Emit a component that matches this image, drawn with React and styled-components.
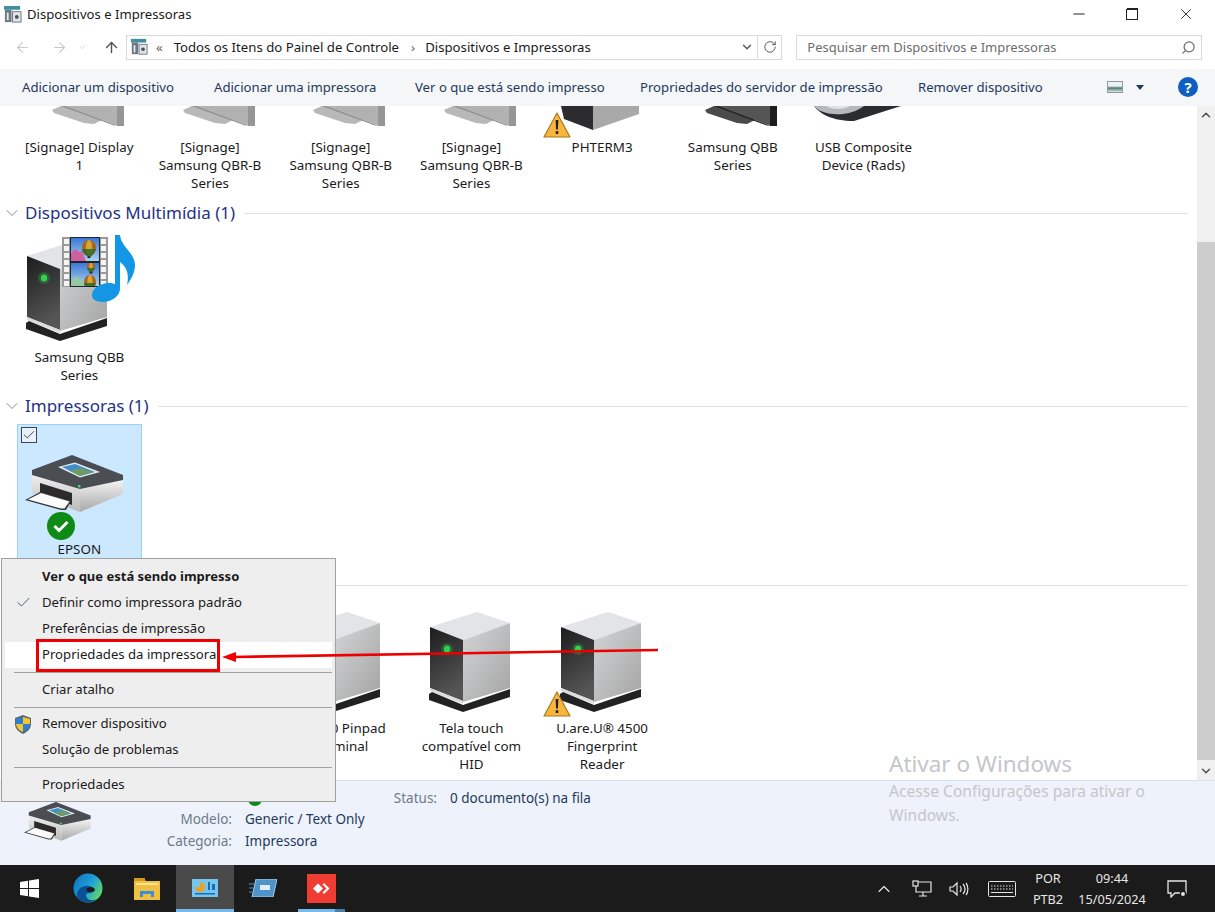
import React from "react";
import styled, { createGlobalStyle } from "styled-components";
import { ArrowLeft, ArrowRight, ArrowUp, ChevronDown, ChevronUp, RotateCw, Search, Minus, X, Check } from "lucide-react";

const GlobalStyle = createGlobalStyle`
  html, body { margin: 0; padding: 0; background: #fff; }
  * { box-sizing: border-box; }
  body { font-family: "Noto Sans", "Open Sans", sans-serif; font-size: 13.1px; color: #1a1a1a; }
`;

const WarningBadge = ({ className }) => (
  <svg className={className} width="28" height="26" viewBox="0 0 28 26">
    <path d="M14 1 L27 25 H1 Z" fill="#f8b73c" stroke="#a8781f" strokeWidth="1.2" strokeLinejoin="round" />
    <path d="M12.6 8 h2.8 l-.5 9.5 h-1.8 z" fill="#222" />
    <rect x="12.7" y="19.2" width="2.6" height="2.8" fill="#222" />
  </svg>
);

const ServerBody = () => (
  <>
    <path d="M1 15 L48 0 L81 11 L34 28 Z" fill="#e2e4e7" />
    <path d="M1 15 L34 28 V89 L1 76 Z" fill="url(#srvFront)" />
    <path d="M34 28 L81 11 V76 L34 90 Z" fill="url(#srvSide)" />
    <path d="M1 76 L34 89 L34 92 L1 79 Z" fill="#dcdcdc" />
    <path d="M0 82 L3 80 L34 93 L81 77 V85 L34 100 L0 88 Z" fill="#222" />
    <circle cx="18" cy="37" r="6" fill="#2fd14a" opacity="0.25" />
    <ellipse cx="18" cy="37" rx="3.2" ry="3.6" fill="#2fd14a" />
  </>
);

const ServerIcon = () => (
  <svg width="82" height="100" viewBox="0 0 82 100">
    <ServerBody />
  </svg>
);

const Balloon = ({ x, y, r }) => (
  <g>
    <ellipse cx={x} cy={y} rx={r} ry={r * 1.15} fill="#a8641c" />
    <ellipse cx={x} cy={y} rx={r * 0.45} ry={r * 1.15} fill="#d9a52e" />
    <path d={`M${x - r} ${y + 1} h${r * 2} c-1 ${r * 0.5} -${r * 0.5} ${r} -${r} ${r * 1.1} c-${r * 0.5} -${r * 0.1} -${r} -${r * 0.6} -${r} -${r * 1.1} z`} fill="#2f6a2b" opacity="0.85" />
    <rect x={x - 1.5} y={y + r * 1.15} width="3" height="2" fill="#2a2a2a" />
  </g>
);

const FilmHoles = ({ x }) => (
  <>
    {[4, 11, 18, 25, 32, 39, 46].map((y) => (
      <rect key={y} x={x} y={y} width="5" height="5" fill="#f4f4f4" />
    ))}
  </>
);

const MediaServerIcon = () => (
  <svg width="112" height="108" viewBox="0 0 112 108">
    <defs>
      <linearGradient id="skyA" x1="0" y1="0" x2="0" y2="1">
        <stop offset="0" stopColor="#3c78d8" />
        <stop offset="1" stopColor="#a8d4ee" />
      </linearGradient>
      <clipPath id="frameB">
        <rect x="45" y="28" width="28" height="23" />
      </clipPath>
    </defs>
    <g transform="translate(0,6)">
      <ServerBody />
    </g>
    <rect x="36" y="2" width="46" height="50" fill="#9a9a9a" />
    <FilmHoles x="38" />
    <FilmHoles x="75" />
    <rect x="44" y="2" width="30" height="50" fill="#20242c" />
    <rect x="45" y="3" width="28" height="23" fill="url(#skyA)" />
    <rect x="45" y="28" width="28" height="23" fill="url(#skyA)" />
    <path d="M45 26 v-8 l4 -4 4 3 3 -1 4 10 z" fill="#cf5f9e" />
    <path d="M45 51 v-6 l5 -4 5 3 5 7 z" fill="#96c8a8" />
    <Balloon x={63} y={13} r={7} />
    <g clipPath="url(#frameB)">
      <Balloon x={65} y={32} r={4} />
      <Balloon x={64} y={47} r={6} />
    </g>
    <path d="M89 0 h5 c1 12 15 18 15 30 c0 8 -4 14 -8 20 c2 -9 1 -17 -7 -23 V54 c0 7 -9 13 -17 13 c-8 0 -11 -3 -11 -7 c0 -7 9 -12 17 -12 c3 0 5 .5 6 1.5 Z" fill="#1496e6" />
  </svg>
);

const PrinterIcon = ({ width = 100, tag = "a" }) => (
  <svg width={width} height={(width * 60) / 100} viewBox="0 0 100 60">
    <defs>
      <linearGradient id={`prnFront${tag}`} x1="0" y1="0" x2="0" y2="1">
        <stop offset="0" stopColor="#f2f2f2" />
        <stop offset="1" stopColor="#b8b8b8" />
      </linearGradient>
      <linearGradient id={`prnSide${tag}`} x1="0" y1="0" x2="0" y2="1">
        <stop offset="0" stopColor="#f6f6f6" />
        <stop offset="1" stopColor="#a8a8a8" />
      </linearGradient>
    </defs>
    <path d="M7 18 L55 34 V57 L47 54 L7 38 Z" fill={`url(#prnFront${tag})`} />
    <path d="M55 34 L98 24 V39 L55 57 Z" fill={`url(#prnSide${tag})`} />
    <path d="M15 28 L47 38 V50 L15 38 Z" fill="#2b2b2b" />
    <path d="M0 45 L15 37 L46 46 L41 55 L36 55 Z" fill="#3a3a3a" />
    <path d="M3 44.5 L16 38 L44.5 46.5 L39.5 53.5 L36 53.5 Z" fill="#fbfbfb" />
    <path d="M7 15 L47 0 L98 20 V25 L55 34 L7 20 Z" fill="#4a4e53" />
    <path d="M33 12 L50 7.5 L75 17 L55 22.5 Z" fill="#e6ecef" />
    <path d="M37 12 L50 9 L70 17 L55 21 Z" fill="#3f8fcc" />
    <path d="M45 16 L55 13 L68 17 L55 21 Z" fill="#6f9a62" />
    <rect x="53" y="30" width="2.4" height="2.4" fill="#3fe06a" />
  </svg>
);

const CheckBadge = () => (
  <svg width="28" height="28" viewBox="0 0 28 28">
    <circle cx="14" cy="14" r="14" fill="#0e8a16" />
    <path d="M7.5 14 L12 18.5 L20.5 10" fill="none" stroke="#fff" strokeWidth="3" />
  </svg>
);

const MonitorStub = ({ dark }) => (
  <svg width="72" height="20" viewBox="0 0 72 20">
    <path d="M9 0 L0 4 L2 7 L32 17 L42 18 L50 14 L30 0 Z" fill={dark ? "#4a4a4a" : "#b8b8b8"} />
    <path d="M13 0 L65 19.5 H72 V0 Z" fill={dark ? "#555" : "#b2b2b2"} />
    <path d="M13 0 L65 19.5 L62 19.5 L9 0 Z" fill={dark ? "#222" : "#8e8e8e"} />
    <path d="M65 0 H72 V20 H65 Z" fill={dark ? "#1c1c1c" : "#969696"} />
  </svg>
);

const ServerStub = () => (
  <svg width="78" height="24" viewBox="0 0 78 24">
    <path d="M0 0 H32 V24 L3 13 Z" fill="#2c2c2e" />
    <path d="M32 0 H78 V8 L32 24 Z" fill="#a9a9a9" />
  </svg>
);

const UsbStub = () => (
  <svg width="89" height="15" viewBox="0 0 89 15">
    <path d="M2 0 C8 8 20 15 42 15 L89 0 Z" fill="#2a2d30" />
    <path d="M2 0 C10 10 36 12 52 0 Z" fill="#b4b8bc" />
    <path d="M14 0 C20 4 32 4 38 0 Z" fill="#dfe2e4" />
  </svg>
);

const PanelGlyph = ({ size = 20 }) => (
  <svg width={size} height={size} viewBox="0 0 20 20">
    <rect x="1" y="1" width="17" height="4" fill="#3f8f9f" />
    <rect x="2" y="5" width="7" height="13" fill="#6d7780" />
    <rect x="10" y="7" width="9" height="11" fill="#dfe3e6" stroke="#6d7780" />
    <circle cx="14.5" cy="12.5" r="2" fill="#44505a" />
    <rect x="4" y="8" width="2" height="8" fill="#e4e8ea" />
  </svg>
);

const ShieldGlyph = () => (
  <svg width="18" height="19" viewBox="0 0 18 19">
    <path d="M9 0 L17 3 V9 C17 14 13 17 9 19 C5 17 1 14 1 9 V3 Z" fill="#5a6670" />
    <path d="M9 2 V9 H2 V4 Z" fill="#2d7fd3" />
    <path d="M9 2 L16 4 V9 H9 Z" fill="#f4c430" />
    <path d="M2 9 H9 V17 C5 15.5 2.5 13 2 9 Z" fill="#f4c430" />
    <path d="M9 9 H16 C15.5 13 13 15.5 9 17 Z" fill="#2d7fd3" />
  </svg>
);

const Page = styled.div`
  position: relative;
  width: 1215px;
  height: 912px;
  display: flex;
  flex-direction: column;
  overflow: hidden;
  background: #fff;
`;

const SharedDefs = styled.svg`
  position: absolute;
  width: 0;
  height: 0;
`;

const TitleBar = styled.div`
  height: 30px;
  display: flex;
  align-items: center;
  padding: 0 5px 2px 3px;
  gap: 5px;
  line-height: 26px;
`;

const TitleText = styled.span`
  flex: 1;
`;

const WindowButton = styled.span`
  width: 48.5px;
  display: flex;
  justify-content: center;
  align-items: center;
  color: #222;
`;

const RestoreGlyph = styled.span`
  position: relative;
  width: 12px;
  height: 12px;
  &::before, &::after {
    content: "";
    position: absolute;
    border: 1.4px solid #222;
    background: #fff;
    width: 9.5px;
    height: 9.5px;
  }
  &::before { top: 0; right: 0; }
  &::after { bottom: 0; left: 0; }
`;

const NavBar = styled.div`
  height: 39px;
  display: flex;
  align-items: flex-start;
  padding-top: 5px;
  padding-right: 13px;
`;

const NavButtons = styled.div`
  width: 126px;
  height: 25px;
  display: flex;
  align-items: center;
  padding-left: 14px;
  gap: 20px;
`;

const NavArrow = styled.span`
  display: flex;
  color: ${(p) => (p.$on ? "#555" : "#c9c9c9")};
  margin-left: ${(p) => p.$shift || 0}px;
`;

const AddressBox = styled.div`
  width: 657px;
  height: 25px;
  display: flex;
  align-items: center;
  border: 1px solid #d9d9d9;
  padding: 0 0 1px 3px;
  font-size: 13.2px;
`;

const Crumb = styled.span`
  white-space: nowrap;
  margin-left: ${(p) => p.$gap || 0}px;
  color: ${(p) => (p.$soft ? "#666" : "#1a1a1a")};
`;

const AddressEnd = styled.span`
  margin-left: auto;
  display: flex;
  align-items: center;
  height: 100%;
  color: #555;
`;

const AddressDrop = styled.span`
  width: 21px;
  display: flex;
  justify-content: center;
`;

const RefreshCell = styled.span`
  width: 24px;
  height: 100%;
  border-left: 1px solid #d9d9d9;
  display: flex;
  align-items: center;
  justify-content: center;
`;

const SearchBox = styled.div`
  width: 406px;
  height: 25px;
  margin-left: 14px;
  display: flex;
  align-items: center;
  justify-content: space-between;
  border: 1px solid #d9d9d9;
  padding: 0 5px 1px 10px;
  color: #6d6d6d;
  font-size: 13px;
`;

const MirrorSearch = styled(Search)`
  transform: scaleX(-1);
`;

const CommandBar = styled.div`
  height: 37px;
  background: #f4f6f8;
  display: flex;
  align-items: center;
  padding: 0 17px 1px 22px;
  color: #1e395b;
  font-size: 13.15px;
  white-space: nowrap;
`;

const CommandItem = styled.span`
  width: ${(p) => p.$w}px;
`;

const CommandTools = styled.div`
  margin-left: auto;
  display: flex;
  align-items: center;
`;

const ViewGlyph = styled.span`
  width: 16px;
  height: 12px;
  border: 1px solid #8d9aa6;
  background: linear-gradient(#eaf2f7 40%, #4f7a6a 60%, #dfe9ee);
`;

const Caret = styled.span`
  width: 0;
  height: 0;
  margin: 0 34px 0 13px;
  border-left: 4.5px solid transparent;
  border-right: 4.5px solid transparent;
  border-top: 5px solid #1e395b;
`;

const HelpBadge = styled.span`
  width: 20px;
  height: 20px;
  border-radius: 50%;
  background: #0f5fc0;
  color: #fff;
  font-weight: 700;
  font-size: 15px;
  display: flex;
  align-items: center;
  justify-content: center;
`;

const Main = styled.div`
  height: 674px;
  display: flex;
`;

const Content = styled.div`
  flex: 1;
  padding-left: 14px;
  overflow: hidden;
`;

const ItemRow = styled.div`
  display: flex;
  height: ${(p) => p.$height}px;
  margin-top: ${(p) => p.$top || 0}px;
`;

const Item = styled.div`
  position: relative;
  width: 124.7px;
  margin: 0 3px;
  text-align: center;
  font-size: 13.4px;
  line-height: 18px;
  background: ${(p) => (p.$selected ? "#cce8ff" : "transparent")};
  border: 1px solid ${(p) => (p.$selected ? "#99d1ff" : "transparent")};
  border-top-width: ${(p) => (p.$selected ? "1px" : "0")};
  border-bottom: 0;
`;

const IconSlot = styled.div`
  position: relative;
  height: ${(p) => p.$height}px;
  padding-top: ${(p) => p.$top || 0}px;
  display: flex;
  justify-content: center;
  align-items: flex-start;
  margin-left: ${(p) => p.$shift || 0}px;
`;

const Label = styled.div`
  padding: 0 6px;
`;

const Warn = styled(WarningBadge)`
  position: absolute;
  left: ${(p) => p.$left}px;
  bottom: ${(p) => p.$bottom}px;
`;

const Tick = styled.span`
  position: absolute;
  top: 2px;
  left: 3px;
  width: 16px;
  height: 16px;
  border: 1px solid #444;
  background: #e6f2fb;
  display: flex;
  align-items: center;
  justify-content: center;
  color: #333;
`;

const Status = styled.span`
  position: absolute;
  left: 29px;
  top: 87px;
  display: flex;
`;

const GroupHeader = styled.div`
  height: 20px;
  display: flex;
  align-items: center;
  padding-right: 9px;
  margin-left: -12px;
  color: #1e3287;
  font-size: 17px;
  line-height: 18px;
  white-space: nowrap;
`;

const GroupChevron = styled.span`
  display: flex;
  color: #7c7c7c;
  margin-right: 3px;
`;

const GroupRule = styled.span`
  flex: 1;
  height: 1px;
  margin-left: 9px;
  background: #e2e2e2;
`;

const ScrollBar = styled.div`
  width: 18px;
  background: #f0f0f0;
  display: flex;
  flex-direction: column;
  align-items: center;
  color: #555;
`;

const ScrollEnd = styled.span`
  height: 18px;
  flex: none;
  display: flex;
  align-items: center;
  margin-top: ${(p) => p.$top || 0}px;
`;

const ScrollThumb = styled.span`
  width: 100%;
  height: 518px;
  margin-top: ${(p) => p.$top}px;
  background: #cdcdcd;
`;

const DetailPane = styled.div`
  height: 85px;
  background: #eef2fb;
  border-top: 1px solid #d6e0ee;
  padding: 5px 0 0 24px;
  display: grid;
  grid-template-columns: 68px 140px 13px 192px 13px 1fr;
  grid-template-rows: 23px 21px 22px;
  line-height: 22px;
  font-size: 13.5px;
  color: #1e395b;
  align-items: end;
`;

const DetailIcon = styled.div`
  grid-column: 1;
  grid-row: 1 / span 3;
  align-self: start;
  padding-top: 16px;
`;

const DetailKey = styled.span`
  grid-column: ${(p) => p.$col};
  grid-row: ${(p) => p.$row};
  text-align: right;
  color: #6d7a8a;
`;

const DetailValue = styled.span`
  grid-column: ${(p) => p.$col};
  grid-row: ${(p) => p.$row};
`;

const StateDot = styled.span`
  grid-column: 4;
  grid-row: 1;
  align-self: start;
  width: 14px;
  height: 14px;
  margin: 6px 0 0 3px;
  border-radius: 50%;
  background: #0e8a16;
`;

const Taskbar = styled.div`
  height: 47px;
  background: #1b1b1b;
  display: flex;
  align-items: stretch;
  color: #e6e6e6;
`;

const TaskButton = styled.span`
  position: relative;
  width: ${(p) => p.$w || 58}px;
  display: flex;
  align-items: center;
  justify-content: center;
  background: ${(p) => (p.$active ? "#4a4a4a" : "transparent")};
  padding-bottom: 1px;
  &::after {
    content: "";
    position: absolute;
    bottom: 0;
    height: 3px;
    left: ${(p) => (p.$active ? 0 : 6)}px;
    right: ${(p) => (p.$active ? 0 : 6)}px;
    background: ${(p) =>
      p.$active
        ? "#76b9ed"
        : p.$open
          ? "linear-gradient(90deg, #76b9ed 79%, #4a7da6 79%)"
          : "transparent"};
  }
`;

const TrayZone = styled.div`
  margin-left: auto;
  display: flex;
  align-items: center;
`;

const TrayIcon = styled.span`
  width: ${(p) => p.$w}px;
  display: flex;
  justify-content: center;
`;

const TrayText = styled.span`
  width: ${(p) => p.$w}px;
  text-align: center;
  line-height: 21px;
  font-size: 12.7px;
`;

const ContextMenu = styled.div`
  position: absolute;
  left: 1px;
  top: 558px;
  width: 335px;
  height: 244px;
  padding: 5px 3px;
  background: #eeeeee;
  border: 1px solid #a0a0a0;
  z-index: 2;
`;

const MenuRow = styled.div`
  position: relative;
  height: 26px;
  line-height: 24px;
  padding-left: 37px;
  font-weight: ${(p) => (p.$bold ? 700 : 400)};
  font-size: ${(p) => (p.$bold ? 13 : 13.15)}px;
  background: ${(p) => (p.$hot ? "#fff" : "transparent")};
`;

const MenuMark = styled.span`
  position: absolute;
  left: ${(p) => p.$left}px;
  top: 4px;
  display: flex;
  color: #4c5c6c;
`;

const MenuLine = styled.div`
  height: ${(p) => p.$height}px;
  padding-left: 9px;
  display: flex;
  align-items: center;
  &::after {
    content: "";
    width: 100%;
    height: 1px;
    background: #a0a0a0;
  }
`;

const RedBox = styled.div`
  position: absolute;
  left: 36px;
  top: 639px;
  width: 184px;
  height: 33px;
  border: 3px solid #ee0000;
  z-index: 3;
`;

const ArrowLayer = styled.svg`
  position: absolute;
  left: 0;
  top: 0;
  z-index: 3;
  pointer-events: none;
`;

const Watermark = styled.div`
  position: absolute;
  left: 889px;
  top: 750px;
  width: 310px;
  color: #c4c6c9;
  font-size: 15.6px;
  line-height: 24px;
  z-index: 1;
`;

const WatermarkTitle = styled.div`
  font-size: 22.5px;
  line-height: 28px;
  margin-bottom: 1px;
`;

const commands = [
  { label: "Adicionar um dispositivo", w: 192 },
  { label: "Adicionar uma impressora", w: 201 },
  { label: "Ver o que está sendo impresso", w: 225 },
  { label: "Propriedades do servidor de impressão", w: 278 },
  { label: "Remover dispositivo", w: 130 },
];

const topItems = [
  { label: "[Signage] Display 1", stub: <MonitorStub />, shift: 17 },
  { label: "[Signage] Samsung QBR-B Series", stub: <MonitorStub />, shift: 17 },
  { label: "[Signage] Samsung QBR-B Series", stub: <MonitorStub />, shift: 17 },
  { label: "[Signage] Samsung QBR-B Series", stub: <MonitorStub />, shift: 17 },
  { label: "PHTERM3", stub: <ServerStub />, shift: -4, warn: true },
  { label: "Samsung QBB Series", stub: <MonitorStub dark />, shift: 17 },
  { label: "USB Composite Device (Rads)", stub: <UsbStub />, shift: -13 },
];

// the first two labels of this group sit under the context menu
const bottomItems = [
  { label: "" },
  { label: "" },
  { label: "iPP320 Pinpad Terminal" },
  { label: "Tela touch compatível com HID" },
  { label: "U.are.U® 4500 Fingerprint Reader", warn: true },
];

const App = () => {
  return (
    <Page>
      <GlobalStyle />
      <SharedDefs>
        <defs>
          <linearGradient id="srvFront" x1="0" y1="0" x2="0.3" y2="1">
            <stop offset="0" stopColor="#1c1c1c" />
            <stop offset="1" stopColor="#555" />
          </linearGradient>
          <linearGradient id="srvSide" x1="0" y1="0" x2="1" y2="1">
            <stop offset="0" stopColor="#d4d5d7" />
            <stop offset="1" stopColor="#a4a4a4" />
          </linearGradient>
        </defs>
      </SharedDefs>

      <TitleBar>
        <PanelGlyph size={19} />
        <TitleText>Dispositivos e Impressoras</TitleText>
        <WindowButton><Minus size={18} strokeWidth={1.4} /></WindowButton>
        <WindowButton><RestoreGlyph /></WindowButton>
        <WindowButton><X size={18} strokeWidth={1.2} /></WindowButton>
      </TitleBar>

      <NavBar>
        <NavButtons>
          <NavArrow><ArrowLeft size={17} strokeWidth={1.5} /></NavArrow>
          <NavArrow><ArrowRight size={17} strokeWidth={1.5} /></NavArrow>
          <NavArrow $shift={-10}><ChevronDown size={9} strokeWidth={2} /></NavArrow>
          <NavArrow $on $shift={-4}><ArrowUp size={17} strokeWidth={2} /></NavArrow>
        </NavButtons>
        <AddressBox>
          <PanelGlyph size={18} />
          <Crumb $gap={8} $soft>«</Crumb>
          <Crumb $gap={11}>Todos os Itens do Painel de Controle</Crumb>
          <Crumb $gap={12} $soft>›</Crumb>
          <Crumb $gap={10}>Dispositivos e Impressoras</Crumb>
          <AddressEnd>
            <AddressDrop><ChevronDown size={14} strokeWidth={2.4} /></AddressDrop>
            <RefreshCell><RotateCw size={14} strokeWidth={1.6} /></RefreshCell>
          </AddressEnd>
        </AddressBox>
        <SearchBox>
          <span>Pesquisar em Dispositivos e Impressoras</span>
          <MirrorSearch size={15} strokeWidth={2} />
        </SearchBox>
      </NavBar>

      <CommandBar>
        {commands.map((c) => (
          <CommandItem key={c.label} $w={c.w}>{c.label}</CommandItem>
        ))}
        <CommandTools>
          <ViewGlyph />
          <Caret />
          <HelpBadge>?</HelpBadge>
        </CommandTools>
      </CommandBar>

      <Main>
        <Content>
          <ItemRow $height={97}>
            {topItems.map((it, i) => (
              <Item key={i}>
                <IconSlot $height={32} $shift={it.shift}>
                  {it.stub}
                  {it.warn && <Warn $left={6} $bottom={0} />}
                </IconSlot>
                <Label>{it.label}</Label>
              </Item>
            ))}
          </ItemRow>

          <GroupHeader>
            <GroupChevron><ChevronDown size={20} strokeWidth={1.1} /></GroupChevron>
            Dispositivos Multimídia (1)
            <GroupRule />
          </GroupHeader>
          <ItemRow $height={173}>
            <Item>
              <IconSlot $height={125} $top={12} $shift={5}>
                <MediaServerIcon />
              </IconSlot>
              <Label>Samsung QBB Series</Label>
            </Item>
          </ItemRow>

          <GroupHeader>
            <GroupChevron><ChevronDown size={20} strokeWidth={1.1} /></GroupChevron>
            Impressoras (1)
            <GroupRule />
          </GroupHeader>
          <ItemRow $height={151} $top={8}>
            <Item $selected>
              <Tick><Check size={14} strokeWidth={1.5} /></Tick>
              <IconSlot $height={115} $top={30} $shift={-8}>
                <PrinterIcon />
              </IconSlot>
              <Status><CheckBadge /></Status>
              <Label>EPSON</Label>
            </Item>
          </ItemRow>

          <GroupHeader>
            <GroupRule />
          </GroupHeader>
          <ItemRow $height={185}>
            {bottomItems.map((it, i) => (
              <Item key={i}>
                <IconSlot $height={124} $top={17} $shift={-2}>
                  <ServerIcon />
                  {it.warn && <Warn $left={4} $bottom={2} />}
                </IconSlot>
                <Label>{it.label}</Label>
              </Item>
            ))}
          </ItemRow>
        </Content>
        <ScrollBar>
          <ScrollEnd><ChevronUp size={14} strokeWidth={2.6} /></ScrollEnd>
          <ScrollThumb $top={118} />
          <ScrollEnd $top={2}><ChevronDown size={14} strokeWidth={2.6} /></ScrollEnd>
        </ScrollBar>
      </Main>

      <DetailPane>
        <DetailIcon><PrinterIcon width={68} tag="b" /></DetailIcon>
        <StateDot />
        <DetailKey $col={4} $row={1}>Status:</DetailKey>
        <DetailValue $col={6} $row={1}>0 documento(s) na fila</DetailValue>
        <DetailKey $col={2} $row={2}>Modelo:</DetailKey>
        <DetailValue $col={4} $row={2}>Generic / Text Only</DetailValue>
        <DetailKey $col={2} $row={3}>Categoria:</DetailKey>
        <DetailValue $col={4} $row={3}>Impressora</DetailValue>
      </DetailPane>

      <Taskbar>
        <TaskButton>
          <svg width="19" height="19" viewBox="0 0 19 19" fill="#fff">
            <path d="M0 3 L8 1.8 V9 H0 Z M9 1.6 L19 0 V9 H9 Z M0 10 H8 V17.2 L0 16 Z M9 10 H19 V19 L9 17.4 Z" />
          </svg>
        </TaskButton>
        <TaskButton $w={60}>
          <svg width="30" height="30" viewBox="0 0 30 30">
            <defs>
              <linearGradient id="edgeA" x1="0" y1="0" x2="1" y2="0.6">
                <stop offset="0" stopColor="#0c6fbf" />
                <stop offset="0.6" stopColor="#1fa0d8" />
                <stop offset="1" stopColor="#5ed66d" />
              </linearGradient>
            </defs>
            <circle cx="15" cy="15" r="14.5" fill="url(#edgeA)" />
            <path d="M4 24 C3 14 14 10 20 15 C23 18 20 20 16 20 C13 20 12 22 14 25 C16 28 22 28 25 25 C20 31 8 31 4 24 Z" fill="#0b4f94" />
            <path d="M13 17 C15 13 21 13 22 17 C21 19 17 19 15 19 Z" fill="#1b1b1b" />
          </svg>
        </TaskButton>
        <TaskButton>
          <svg width="26" height="24" viewBox="0 0 26 24">
            <path d="M0 3 H10 L12 5 H26 V24 H0 Z" fill="#f0c040" />
            <rect x="0" y="2" width="11" height="3" fill="#d09a20" />
            <rect x="2" y="7" width="22" height="2" fill="#fbe39a" />
            <rect x="6" y="15" width="14" height="6" fill="#3c8fd8" />
            <rect x="9" y="18" width="8" height="6" fill="#f0c040" />
          </svg>
        </TaskButton>
        <TaskButton $active>
          <svg width="26" height="18" viewBox="0 0 26 18">
            <rect width="26" height="18" fill="#74c6f0" />
            <path d="M8 8 V3 A5 5 0 1 1 3 8 Z" fill="#f0a020" />
            <rect x="16" y="3" width="2" height="8" fill="#1c6cb0" />
            <rect x="20" y="5" width="3" height="6" fill="#1c6cb0" />
            <rect x="3" y="14" width="20" height="1.5" fill="#1c6cb0" />
          </svg>
        </TaskButton>
        <TaskButton>
          <svg width="28" height="18" viewBox="0 0 28 18">
            <path d="M7 0 H28 L24 18 H3 Z" fill="#4f93c8" stroke="#9fd0ef" />
            <rect x="11" y="6" width="10" height="5" fill="#dceefa" />
            <path d="M0 5 H5 M0 9 H4 M0 13 H3" stroke="#4f93c8" strokeWidth="1.2" />
          </svg>
        </TaskButton>
        <TaskButton $open $w={59}>
          <svg width="29" height="29" viewBox="0 0 29 29">
            <rect width="29" height="29" fill="#ef3d34" />
            <path d="M11 9.5 L16 14.5 L11 19.5 L6 14.5 Z" fill="#fff" />
            <path d="M17 9 L22.5 14.5 L17 20 L15.5 18.5 L19.5 14.5 L15.5 10.5 Z" fill="#fff" />
          </svg>
        </TaskButton>
        <TrayZone>
          <TrayIcon $w={38}><ChevronUp size={20} strokeWidth={1.4} /></TrayIcon>
          <TrayIcon $w={38}>
            <svg width="20" height="18" viewBox="0 0 20 18" fill="none" stroke="#e6e6e6" strokeWidth="1.2">
              <path d="M4 2 H19 V12 H4 Z M11 12 V16 M7 16 H15" />
              <rect x="1" y="1" width="5" height="5" fill="#1b1b1b" />
            </svg>
          </TrayIcon>
          <TrayIcon $w={36}>
            <svg width="20" height="16" viewBox="0 0 20 16" fill="none" stroke="#e6e6e6" strokeWidth="1.2">
              <path d="M1 6 H4 L8 2 V14 L4 10 H1 Z M11 5 C12.5 7 12.5 9 11 11 M14 3 C16.5 6 16.5 10 14 13 M17 2 C19.5 5 19.5 11 17 14" />
            </svg>
          </TrayIcon>
          <TrayIcon $w={50}>
            <svg width="28" height="16" viewBox="0 0 28 16" fill="none" stroke="#e6e6e6">
              <rect x="0.5" y="0.5" width="27" height="15" rx="1" />
              <path d="M3 5 H25 M3 8 H25" strokeDasharray="1.5 1.5" />
              <path d="M3 11.5 H25" />
            </svg>
          </TrayIcon>
          <TrayText $w={42}>POR<br />PTB2</TrayText>
          <TrayText $w={86}>09:44<br />15/05/2024</TrayText>
          <TrayIcon $w={44}>
            <svg width="20" height="18" viewBox="0 0 20 18" fill="none" stroke="#e6e6e6" strokeWidth="1.3">
              <path d="M1 1 H19 V13 H8 L4 17 V13 H1 Z" fill="#1b1b1b" />
              <circle cx="16" cy="14" r="2.6" fill="#e6e6e6" stroke="#1b1b1b" />
            </svg>
          </TrayIcon>
          <TrayIcon $w={16} />
        </TrayZone>
      </Taskbar>

      <ContextMenu>
        <MenuRow $bold>Ver o que está sendo impresso</MenuRow>
        <MenuRow>
          <MenuMark $left={10}><Check size={17} strokeWidth={1.4} /></MenuMark>
          Definir como impressora padrão
        </MenuRow>
        <MenuRow>Preferências de impressão</MenuRow>
        <MenuRow $hot>Propriedades da impressora</MenuRow>
        <MenuLine $height={9} />
        <MenuRow>Criar atalho</MenuRow>
        <MenuLine $height={8} />
        <MenuRow>
          <MenuMark $left={9}><ShieldGlyph /></MenuMark>
          Remover dispositivo
        </MenuRow>
        <MenuRow>Solução de problemas</MenuRow>
        <MenuLine $height={9} />
        <MenuRow>Propriedades</MenuRow>
      </ContextMenu>

      <RedBox />
      <ArrowLayer width="1215" height="912" viewBox="0 0 1215 912">
        <path d="M658 650 L234 657" stroke="#ee0000" strokeWidth="2.6" fill="none" />
        <path d="M222 657 L236 652 V662 Z" fill="#ee0000" />
      </ArrowLayer>

      <Watermark>
        <WatermarkTitle>Ativar o Windows</WatermarkTitle>
        Acesse Configurações para ativar o<br />Windows.
      </Watermark>
    </Page>
  );
};

export default App;
